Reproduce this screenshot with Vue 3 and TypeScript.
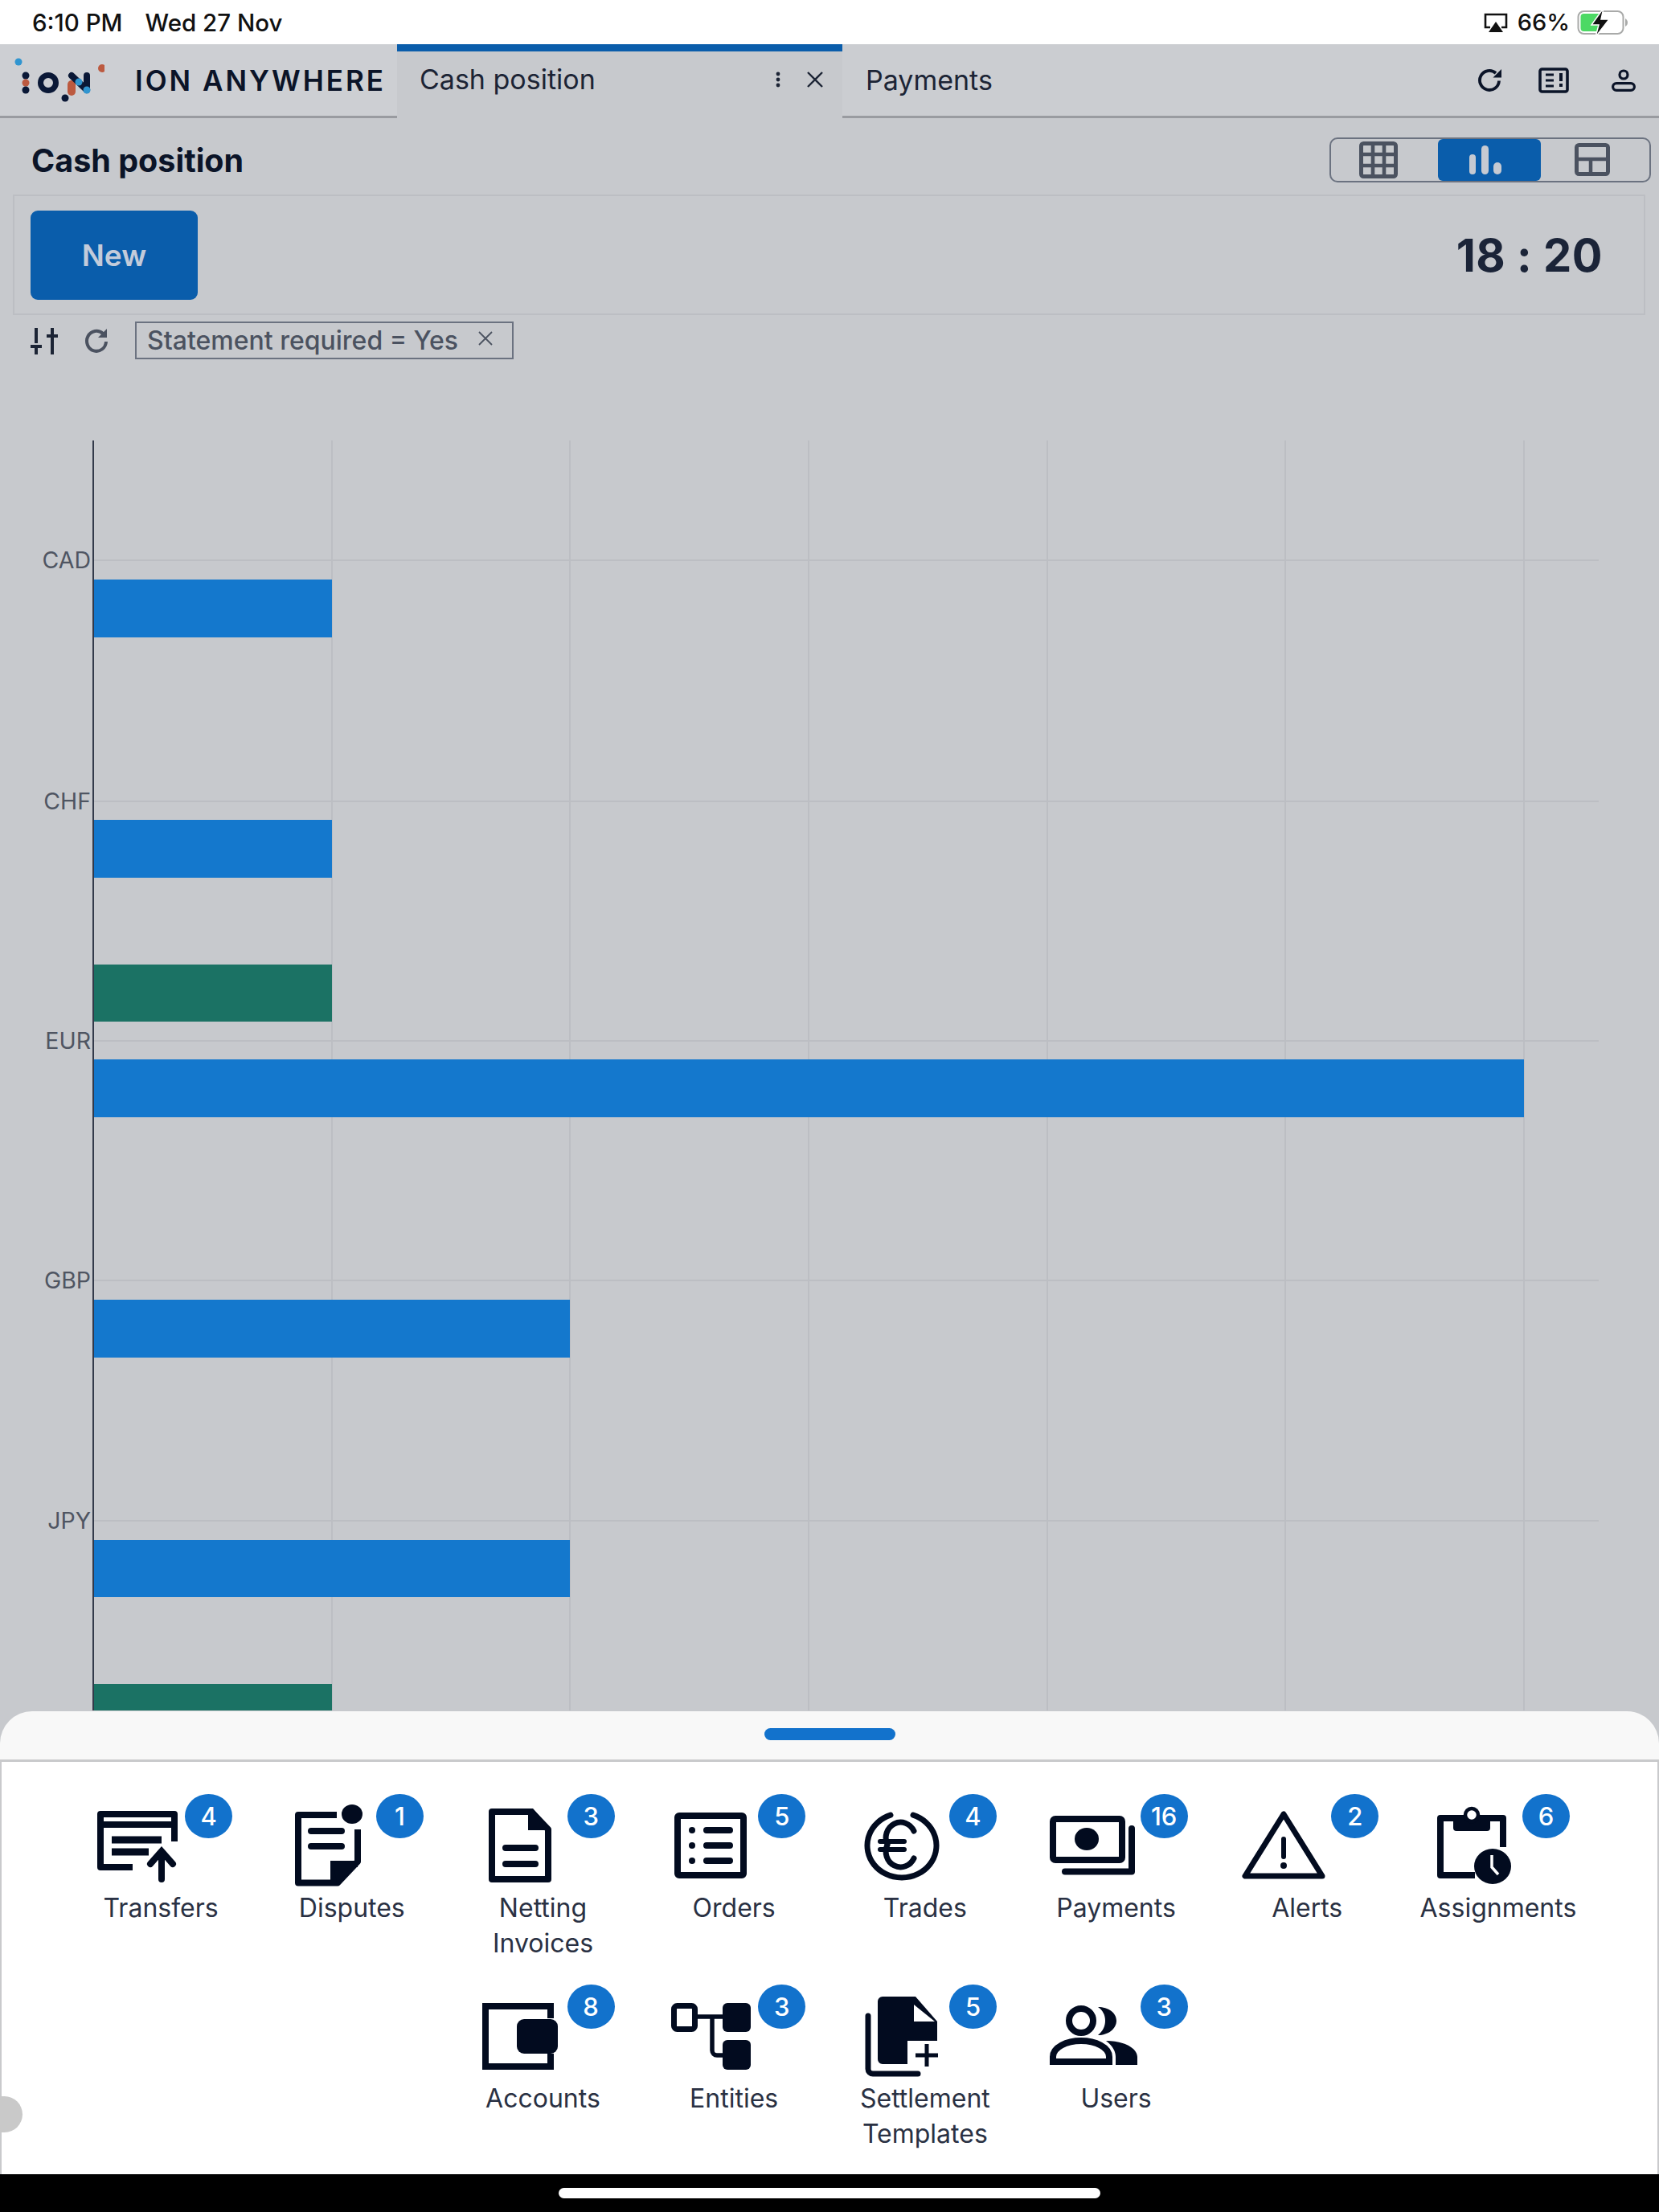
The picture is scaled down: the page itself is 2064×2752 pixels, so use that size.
<script setup lang="ts">
interface MenuItem {
  name: string;
  lines: string[];
  count: number;
}

const items: MenuItem[] = [
  { name: 'transfers', lines: ['Transfers'], count: 4 },
  { name: 'disputes', lines: ['Disputes'], count: 1 },
  { name: 'netting', lines: ['Netting', 'Invoices'], count: 3 },
  { name: 'orders', lines: ['Orders'], count: 5 },
  { name: 'trades', lines: ['Trades'], count: 4 },
  { name: 'payments', lines: ['Payments'], count: 16 },
  { name: 'alerts', lines: ['Alerts'], count: 2 },
  { name: 'assignments', lines: ['Assignments'], count: 6 },
  { name: 'accounts', lines: ['Accounts'], count: 8 },
  { name: 'entities', lines: ['Entities'], count: 3 },
  { name: 'templates', lines: ['Settlement', 'Templates'], count: 5 },
  { name: 'users', lines: ['Users'], count: 3 },
];

const gridX = [116, 413, 709, 1006, 1303, 1599, 1896];

const rows = [
  { label: 'CAD', y: 697 },
  { label: 'CHF', y: 997 },
  { label: 'EUR', y: 1295 },
  { label: 'GBP', y: 1593 },
  { label: 'JPY', y: 1892 },
];

const bars = [
  { y: 721, x2: 413, h: 72, color: '#1478cd' },
  { y: 1020, x2: 413, h: 72, color: '#1478cd' },
  { y: 1200, x2: 413, h: 71, color: '#1b7264' },
  { y: 1318, x2: 1896, h: 72, color: '#1478cd' },
  { y: 1617, x2: 709, h: 72, color: '#1478cd' },
  { y: 1916, x2: 709, h: 71, color: '#1478cd' },
  { y: 2095, x2: 413, h: 33, color: '#1b7264' },
];
</script>

<template>
  <div class="page">
    <div class="status">
      <div class="status-left">
        <span>6:10 PM</span>
        <span>Wed 27 Nov</span>
      </div>
      <div class="status-right">
        <svg class="airplay" viewBox="0 0 30 24">
          <path d="M8 18H2V2h26v16h-6" fill="none" stroke="#111" stroke-width="2.6" />
          <path d="M15 11l9 13H6z" fill="#111" />
        </svg>
        <span>66%</span>
        <svg class="battery" viewBox="0 0 64 36">
          <rect x="1.5" y="4" width="56" height="28" rx="7" fill="none" stroke="#a9aaa9" stroke-width="2" />
          <rect x="4.5" y="7" width="26" height="22" rx="4" fill="#4cd964" />
          <path d="M60 13c2 1 3 3 3 5s-1 4-3 5z" fill="#a9aaa9" />
          <path d="M33 0L18 21h9l-4 15 17-22H30z" fill="#111" stroke="#fff" stroke-width="1.5" />
        </svg>
      </div>
    </div>

    <header class="tabbar">
      <div class="brand">
        <svg class="logo" viewBox="0 0 130 90">
          <circle cx="23" cy="22" r="4.5" fill="#3095d0" />
          <circle cx="127" cy="30" r="5" fill="#bc5a40" />
          <circle cx="32" cy="39" r="4.5" fill="#0a1836" />
          <circle cx="32" cy="48" r="4.5" fill="#bc5a40" />
          <circle cx="32" cy="57" r="4.5" fill="#0a1836" />
          <circle cx="60" cy="48" r="9.5" fill="none" stroke="#0a1836" stroke-width="7" />
          <path d="M89 50v9" stroke="#bc5a40" stroke-width="10" stroke-linecap="round" />
          <path d="M89 39l19 18M108 39v18" fill="none" stroke="#0a1836" stroke-width="8" stroke-linecap="round" />
          <circle cx="98" cy="47" r="4.5" fill="#3095d0" />
          <circle cx="108" cy="57" r="4.5" fill="#3095d0" />
          <circle cx="81" cy="67" r="4.5" fill="#0a1836" />
        </svg>
        <span class="brand-name">ION ANYWHERE</span>
      </div>
      <div class="tab-active">
        <span>Cash position</span>
        <div class="tab-actions">
          <svg class="tab-icon" viewBox="0 0 24 24">
            <circle cx="12" cy="5" r="2.4" fill="#1c2435" />
            <circle cx="12" cy="12" r="2.4" fill="#1c2435" />
            <circle cx="12" cy="19" r="2.4" fill="#1c2435" />
          </svg>
          <svg class="tab-icon" viewBox="0 0 24 24">
            <path d="M3 3l18 18M21 3L3 21" stroke="#1c2435" stroke-width="2.4" />
          </svg>
        </div>
      </div>
      <div class="tab-rest">
        <span class="tab-name">Payments</span>
        <div class="top-icons">
          <svg class="top-icon refresh" viewBox="0 0 32 28">
            <path d="M27 14.5a12 12 0 1 1-4-9.5" fill="none" stroke="#0b1428" stroke-width="3.8" />
            <path d="M30 0v10.5H19.5z" fill="#0b1428" />
          </svg>
          <svg class="top-icon notes" viewBox="0 0 38 32">
            <rect x="2" y="2" width="34" height="28" rx="2.5" fill="none" stroke="#0b1428" stroke-width="3.6" />
            <path d="M9 9h10M9 16h10M9 23h10" stroke="#0b1428" stroke-width="3" />
            <path d="M28 7v10M28 20v4" stroke="#0b1428" stroke-width="4" />
          </svg>
          <svg class="top-icon person" viewBox="0 0 30 28">
            <circle cx="15" cy="7" r="5" fill="none" stroke="#0b1428" stroke-width="3.2" />
            <rect x="1.6" y="17.6" width="26.8" height="8.8" rx="4.4" fill="none" stroke="#0b1428" stroke-width="3.2" />
          </svg>
        </div>
      </div>
    </header>

    <div class="title-row">
      <h1>Cash position</h1>
      <div class="view-toggle">
        <div class="view view-grid">
          <svg class="icon-grid" viewBox="0 0 48 46">
            <rect x="2.5" y="2.5" width="43" height="41" rx="3" fill="none" stroke="#4b5260" stroke-width="5" />
            <path d="M17 2v42M31 2v42M2 16h44M2 30h44" stroke="#4b5260" stroke-width="4.6" />
          </svg>
        </div>
        <div class="view view-on">
          <svg class="icon-bars" viewBox="0 0 40 36">
            <rect x="0" y="11" width="8" height="25" rx="4" fill="#c6cad2" />
            <rect x="15" y="0" width="9" height="36" rx="4.5" fill="#c6cad2" />
            <rect x="30" y="21" width="10" height="15" rx="5" fill="#c6cad2" />
          </svg>
        </div>
        <div class="view view-split">
          <svg class="icon-split" viewBox="0 0 44 41">
            <rect x="2.5" y="2.5" width="39" height="36" rx="3" fill="none" stroke="#4b5260" stroke-width="5" />
            <path d="M2 20h40M20 20v20" stroke="#4b5260" stroke-width="4.5" />
          </svg>
        </div>
      </div>
    </div>

    <div class="toolbar">
      <button class="new-btn">New</button>
      <span class="clock">18 : 20</span>
    </div>

    <div class="filters">
      <svg class="filter-icon" viewBox="0 0 34 36">
        <path d="M7 2v19M0 25h14M7 25v10" stroke="#1c2435" stroke-width="4" fill="none" />
        <path d="M27 2v8M20 12h14M27 12v23" stroke="#1c2435" stroke-width="4" fill="none" />
      </svg>
      <svg class="filter-icon refresh-small" viewBox="0 0 32 36">
        <path d="M27 19a12 12.5 0 1 1-4-10" fill="none" stroke="#4b5260" stroke-width="4" />
        <path d="M28 3v11H17z" fill="#4b5260" />
      </svg>
      <div class="chip">
        <span>Statement required = Yes</span>
        <svg class="chip-x" viewBox="0 0 20 20">
          <path d="M2 2l16 16M18 2L2 18" stroke="#4b5260" stroke-width="1.8" />
        </svg>
      </div>
    </div>

    <svg class="chart" viewBox="0 440 2064 1690" width="2064" height="1690">
      <line v-for="x in gridX" :key="x" :x1="x" :x2="x" y1="548" y2="2128" stroke="#bcbec3" stroke-width="2" />
      <line v-for="r in rows" :key="r.label" x1="116" x2="1989" :y1="r.y" :y2="r.y" stroke="#bcbec3" stroke-width="2" />
      <rect v-for="b in bars" :key="b.y" x="116" :y="b.y" :width="b.x2 - 116" :height="b.h" :fill="b.color" />
      <line x1="116" x2="116" y1="548" y2="2128" stroke="#333a4a" stroke-width="2" />
      <text v-for="r in rows" :key="r.label" class="axis-label" x="113" :y="r.y + 10" text-anchor="end">{{ r.label }}</text>
    </svg>

    <section class="sheet">
      <div class="sheet-head"><span class="handle"></span></div>
      <div class="sheet-body">
        <span class="side-tab"></span>
        <div v-for="item in items" :key="item.name" class="item">
          <div class="item-top">
            <svg class="item-icon" viewBox="0 0 100 100">
              <g v-if="item.name === 'transfers'" fill="none" stroke="#020b1f" stroke-width="8">
                <path d="M44 77H4V11h92v34" stroke-linejoin="round" />
                <path d="M4 24h92" />
                <path d="M18 43h62l-6 0M18 58h46" stroke-width="9" />
                <path d="M80 92V58M66 73l14-16 14 16" stroke-linecap="round" />
              </g>
              <g v-else-if="item.name === 'disputes'" fill="none" stroke="#020b1f" stroke-width="8">
                <path d="M60 12H12v84.500h49L86 70V30" stroke-linejoin="round" />
                <path d="M56 94V73h30" />
                <path d="M56 76h24L60 96z" fill="#020b1f" stroke="none" />
                <ellipse cx="79" cy="11" rx="13" ry="12" fill="#020b1f" stroke="none" />
                <path d="M28 32h38M28 51h38" stroke-linecap="round" />
              </g>
              <g v-else-if="item.name === 'netting'" fill="none" stroke="#020b1f" stroke-width="8">
                <path d="M64 8H15v84h70V30z" stroke-linejoin="round" />
                <path d="M60 4h6l23 27H60z" fill="#020b1f" stroke="none" />
                <path d="M32 53h37M32 73h37" stroke-linecap="round" />
              </g>
              <g v-else-if="item.name === 'orders'" fill="none" stroke="#020b1f" stroke-width="8">
                <rect x="9" y="13" width="82" height="74" rx="2" />
                <path d="M45 31h29M45 50h29M45 69h29" stroke-linecap="round" />
                <circle cx="27" cy="31" r="4" fill="#020b1f" stroke="none" />
                <circle cx="27" cy="50" r="4" fill="#020b1f" stroke="none" />
                <circle cx="27" cy="69" r="4" fill="#020b1f" stroke="none" />
              </g>
              <g v-else-if="item.name === 'trades'" fill="none" stroke="#020b1f" stroke-width="7">
                <path d="M36 12.200A43 40 0 1 0 64 12.200" stroke-linecap="round" />
                <path d="M65 32A18 19 0 0 0 32 49A18 19 0 0 0 65 66" stroke-linecap="round" />
                <path d="M23 45h30M23 55h30" stroke-width="6" stroke-linecap="round" />
              </g>
              <g v-else-if="item.name === 'payments'" fill="none" stroke="#020b1f" stroke-width="8">
                <rect x="0" y="17" width="86" height="51" rx="3" />
                <ellipse cx="42" cy="42" rx="15" ry="14" fill="#020b1f" stroke="none" />
                <path d="M98 29v53.500H15" stroke-linecap="round" stroke-linejoin="round" />
              </g>
              <g v-else-if="item.name === 'alerts'" fill="none" stroke="#020b1f" stroke-width="7">
                <path d="M50 11L2 88h96z" stroke-linejoin="round" />
                <path d="M50 42v22" stroke-linecap="round" stroke-width="6" />
                <circle cx="50" cy="75" r="4" fill="#020b1f" stroke="none" />
              </g>
              <g v-else-if="item.name === 'assignments'" fill="none" stroke="#020b1f" stroke-width="8">
                <path d="M50 87H7V16h78v36" stroke-linejoin="round" />
                <path d="M23 13h46v15a4 4 0 0 1-4 4H27a4 4 0 0 1-4-4z" fill="#020b1f" stroke="none" />
                <circle cx="46" cy="12" r="8" fill="#fff" stroke="#020b1f" stroke-width="4.500" />
                <ellipse cx="72" cy="76" rx="23" ry="22" fill="#020b1f" stroke="none" />
                <path d="M71 62v15l8 9" stroke="#fff" stroke-width="3.500" />
              </g>
              <g v-else-if="item.name === 'accounts'" fill="none" stroke="#020b1f" stroke-width="8">
                <path d="M88 28V13H7v75h81V72" />
                <rect x="46" y="29" width="51" height="43" rx="9" fill="#020b1f" stroke="none" />
              </g>
              <g v-else-if="item.name === 'entities'" fill="#020b1f" stroke="none">
                <rect x="4.500" y="12.500" width="26" height="29" rx="4" fill="none" stroke="#020b1f" stroke-width="7" />
                <rect x="65" y="9" width="35" height="36" rx="6" />
                <rect x="65" y="55" width="35" height="37" rx="6" />
                <path d="M31 26h34M52 26v42a6 6 0 0 0 6 6h7" fill="none" stroke="#020b1f" stroke-width="5.500" />
              </g>
              <g v-else-if="item.name === 'templates'">
                <path d="M26 1h41l27 31v24H57v29H26a6 6 0 0 1-6-6V7a6 6 0 0 1 6-6z" fill="#020b1f" />
                <path d="M65 11l26 21H65z" fill="#fff" />
                <path d="M81 60v28M67 74h28" stroke="#020b1f" stroke-width="5" fill="none" />
                <path d="M8 25v66a6 6 0 0 0 6 6h56" fill="none" stroke="#020b1f" stroke-width="7" stroke-linecap="round" />
              </g>
              <g v-else-if="item.name === 'users'" fill="#020b1f" stroke="none">
                <ellipse cx="35" cy="31" rx="15" ry="15" fill="none" stroke="#020b1f" stroke-width="8" />
                <path d="M56 14c13 0 23 7 23 17s-10 18-23 18c6-5 9-11 9-18s-3-13-9-17z" />
                <path d="M0 82V76c0-12 17-20 35-20s35 8 35 20v6z" fill="none" stroke="#020b1f" stroke-width="8" />
                <path d="M66 56c22 0 39 9 39 20v10H78V76c0-7-4-14-12-20z" />
              </g>
            </svg>
            <span class="badge">{{ item.count }}</span>
          </div>
          <div class="item-label">
            <div v-for="line in item.lines" :key="line">{{ line }}</div>
          </div>
        </div>
      </div>
    </section>

    <div class="home-bar"><span class="home-pill"></span></div>
  </div>
</template>

<style>
html,
body {
  margin: 0;
  background: #c7c9cd;
}
</style>

<style scoped>
.page {
  position: relative;
  width: 2064px;
  height: 2752px;
  overflow: hidden;
  background: #c7c9cd;
  font-family: Inter, "Liberation Sans", sans-serif;
  color: #0b1428;
  display: flex;
  flex-direction: column;
}

.status {
  height: 55px;
  flex: none;
  background: #fff;
  display: flex;
  align-items: center;
  justify-content: space-between;
  padding: 0 38px 0 40px;
  color: #111;
}

.status-left {
  display: flex;
  gap: 28px;
  font-size: 29.5px;
  font-weight: 500;
}

.status-right {
  display: flex;
  align-items: center;
  font-weight: 500;
  font-size: 29px;
}

.airplay {
  width: 30px;
  height: 24px;
  margin-right: 12px;
}

.battery {
  width: 64px;
  height: 36px;
  margin-left: 9px;
}

.tabbar {
  height: 92px;
  flex: none;
  display: flex;
  background: #cbcdd1;
}

.brand {
  width: 494px;
  box-sizing: border-box;
  display: flex;
  align-items: center;
  border-bottom: 3px solid #999ba0;
  background: #cdcfd3;
}

.logo {
  width: 130px;
  height: 90px;
  flex: none;
}

.brand-name {
  margin-left: 38px;
  font-size: 35px;
  font-weight: 600;
  letter-spacing: 3px;
  color: #0b1428;
  white-space: nowrap;
}

.tab-active {
  width: 554px;
  box-sizing: border-box;
  border-top: 9px solid #0a5dab;
  padding: 0 22px 14px 28px;
  display: flex;
  align-items: center;
  justify-content: space-between;
  background: #c7c9cd;
  font-size: 34px;
  color: #1c2435;
}

.tab-actions {
  display: flex;
  gap: 22px;
}

.tab-icon {
  width: 24px;
  height: 24px;
}

.tab-rest {
  flex: 1;
  box-sizing: border-box;
  display: flex;
  align-items: center;
  justify-content: space-between;
  border-bottom: 3px solid #999ba0;
  padding: 0 29px 0 29px;
}

.tab-name {
  font-size: 34px;
  color: #1c2435;
}

.top-icons {
  display: flex;
  align-items: center;
  gap: 44px;
}

.top-icon.refresh {
  width: 32px;
  height: 28px;
}

.top-icon.notes {
  width: 38px;
  height: 32px;
}

.top-icon.person {
  width: 30px;
  height: 28px;
  margin-left: 9px;
}

.title-row {
  height: 95px;
  flex: none;
  box-sizing: border-box;
  display: flex;
  align-items: center;
  justify-content: space-between;
  padding: 8px 10px 0 39px;
}

h1 {
  margin: 2px 0 0;
  font-size: 39.5px;
  font-weight: 700;
  color: #0b1428;
}

.view-toggle {
  display: flex;
  width: 400px;
  height: 56px;
  box-sizing: border-box;
  border: 2px solid #6b7280;
  border-radius: 10px;
  overflow: hidden;
}

.view {
  display: flex;
  align-items: center;
  justify-content: center;
}

.view-grid {
  width: 133px;
  padding-right: 15px;
  box-sizing: border-box;
}

.view-on {
  width: 128px;
  background: #0a5dab;
  border-radius: 6px;
  padding-right: 10px;
  box-sizing: border-box;
}

.view-split {
  flex: 1;
  padding-right: 7px;
  box-sizing: border-box;
}

.icon-grid {
  width: 48px;
  height: 46px;
}

.icon-bars {
  width: 40px;
  height: 36px;
}

.icon-split {
  width: 44px;
  height: 41px;
}

.toolbar {
  height: 150px;
  flex: none;
  margin: 0 17px 0 16px;
  box-sizing: border-box;
  border: 2px solid #bcbec3;
  display: flex;
  align-items: center;
  justify-content: space-between;
  padding: 0 51px 0 20px;
}

.new-btn {
  width: 208px;
  height: 111px;
  border: none;
  border-radius: 9px;
  background: #0a5dab;
  color: #c3cbda;
  font-family: inherit;
  font-size: 37px;
  font-weight: 600;
}

.clock {
  font-size: 56px;
  font-weight: 700;
  color: #1b2438;
  letter-spacing: 0.5px;
  padding-top: 2px;
}

.filters {
  flex: none;
  height: 47px;
  margin-top: 8px;
  display: flex;
  align-items: center;
  padding-left: 38px;
}

.filter-icon {
  width: 34px;
  height: 36px;
  margin-right: 33px;
}

.refresh-small {
  width: 32px;
  margin-right: 31px;
}

.chip {
  box-sizing: border-box;
  width: 471px;
  height: 47px;
  display: flex;
  align-items: center;
  justify-content: space-between;
  padding: 0 23px 0 13px;
  border: 2px solid #6b7280;
  color: #4b5260;
  font-size: 32px;
  font-weight: 500;
  white-space: nowrap;
}

.chip-x {
  width: 20px;
  height: 20px;
  margin-bottom: 6px;
}

.chart {
  position: absolute;
  left: 0;
  top: 440px;
}

.axis-label {
  font-family: Inter, "Liberation Sans", sans-serif;
  font-size: 28.5px;
  fill: #4f5562;
}

.sheet {
  position: absolute;
  left: 0;
  right: 0;
  top: 2129px;
  bottom: 47px;
  display: flex;
  flex-direction: column;
}

.sheet-head {
  height: 60px;
  flex: none;
  background: #f8f8f8;
  border-radius: 40px 40px 0 0;
  display: flex;
  justify-content: center;
  padding-top: 21px;
  box-sizing: border-box;
}

.handle {
  width: 163px;
  height: 15px;
  border-radius: 8px;
  background: #1272cc;
}

.sheet-body {
  position: relative;
  flex: 1;
  background: #fff;
  border: 2px solid #c9cacc;
  border-width: 3px 2px;
  box-sizing: border-box;
  display: flex;
  flex-wrap: wrap;
  justify-content: center;
  align-content: flex-start;
  padding: 39px 79px 0;
}

.side-tab {
  position: absolute;
  left: -2px;
  top: 416px;
  width: 28px;
  height: 45px;
  border-radius: 0 24px 24px 0;
  background: #c9c9c9;
}

.item {
  width: 237.7px;
  height: 237px;
  box-sizing: border-box;
  display: flex;
  flex-direction: column;
  align-items: center;
}

.item-top {
  position: relative;
  width: 100%;
  height: 110px;
}

.item-icon {
  position: absolute;
  left: 40px;
  top: 15px;
  width: 100px;
  height: 100px;
  overflow: visible;
}

.badge {
  position: absolute;
  left: 149px;
  top: 1px;
  width: 59px;
  height: 55px;
  border-radius: 50%;
  background: #1272cc;
  color: #fff;
  font-size: 31px;
  font-weight: 500;
  display: flex;
  align-items: center;
  justify-content: center;
}

.item-label {
  margin-top: 11px;
  font-size: 32px;
  line-height: 44px;
  color: #2a3143;
  text-align: center;
  white-space: nowrap;
}

.home-bar {
  position: absolute;
  left: 0;
  right: 0;
  bottom: 0;
  height: 47px;
  background: #000;
  display: flex;
  justify-content: center;
  padding-top: 17px;
  box-sizing: border-box;
}

.home-pill {
  width: 674px;
  height: 13px;
  border-radius: 7px;
  background: #fff;
}
</style>
